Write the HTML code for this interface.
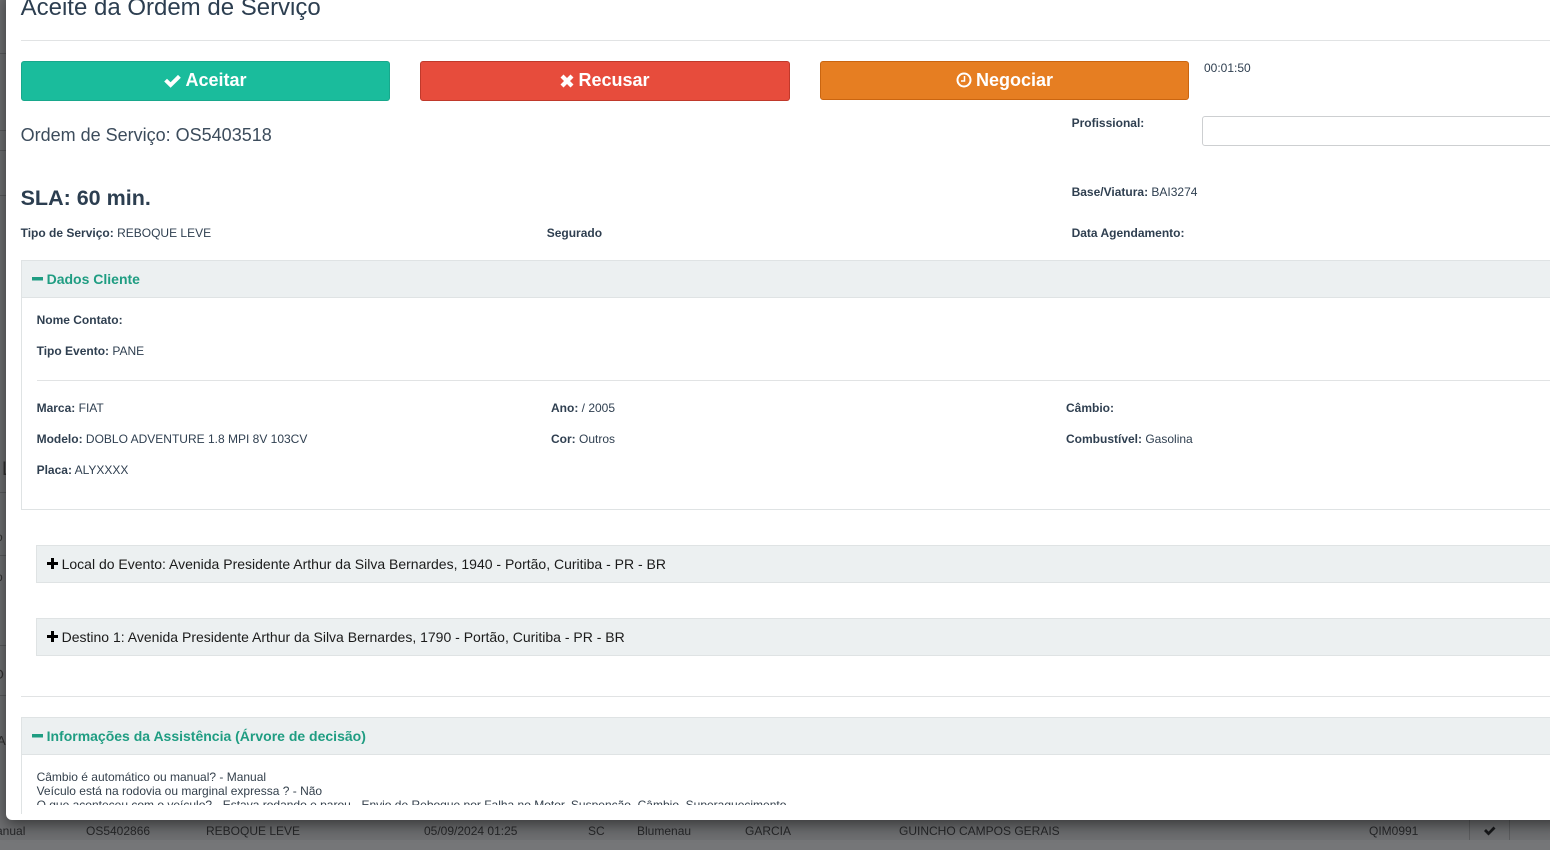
<!DOCTYPE html>
<html lang="pt">
<head>
<meta charset="utf-8">
<title>Aceite da Ordem de Serviço</title>
<style>
html,body{margin:0;padding:0;width:1550px;height:850px;overflow:hidden;background:#6e6f71;font-family:"Liberation Sans",sans-serif;color:#2c3e50}
*{box-sizing:border-box}
.a{position:absolute;white-space:nowrap}
.bg{color:#262729;font-size:12px;line-height:16px}
.sl{position:absolute;left:0;width:6px;height:1px;background:#5a5b5d}
#modal{position:absolute;left:6px;top:-10px;width:1560px;height:830px;background:#fff;border-radius:6px;box-shadow:0 5px 15px rgba(0,0,0,.5);overflow:hidden}
#c{position:absolute;left:-6px;top:10px;width:1550px;height:820px}
.t{font-size:12px;line-height:16px;color:#2f3f50}
.t b{font-weight:700}
.hr{position:absolute;height:1px;background:#e1e3e4}
.btn{position:absolute;top:61px;height:40px;border-radius:3px;color:#fff;font-weight:700;font-size:18px;line-height:36px;text-align:center;border:1px solid}
.btn svg{display:inline-block;vertical-align:-2px;margin-right:4px}
.ph{position:absolute;left:21px;width:1540px;height:38px;background:#ecf0f1;border:1px solid #dfe3e4}
.ph2{position:absolute;left:36px;width:1530px;height:38px;background:#ecf0f1;border:1px solid #dfe3e4}
.gt{font-size:14px;font-weight:700;color:#1f9d82;line-height:18px}
.bk{font-size:14px;color:#1b1b1b;line-height:18px}
</style>
</head>
<body>
<div class="a bg" style="left:-14px;top:823px">Manual</div>
<div class="a bg" style="left:86px;top:823px">OS5402866</div>
<div class="a bg" style="left:206px;top:823px">REBOQUE LEVE</div>
<div class="a bg" style="left:424px;top:823px">05/09/2024 01:25</div>
<div class="a bg" style="left:588px;top:823px">SC</div>
<div class="a bg" style="left:637px;top:823px">Blumenau</div>
<div class="a bg" style="left:745px;top:823px">GARCIA</div>
<div class="a bg" style="left:899px;top:823px">GUINCHO CAMPOS GERAIS</div>
<div class="a bg" style="left:1369px;top:823px">QIM0991</div>
<div class="a" style="left:1469px;top:820px;width:1px;height:20px;background:#5c5d5f"></div>
<div class="a" style="left:1509px;top:820px;width:1px;height:20px;background:#5c5d5f"></div>
<svg class="a" style="left:1483px;top:825px" width="13" height="11" viewBox="0 0 13 11"><path d="M1 6l2-2 2.600 2.600L10.500 1.500l2 2-7 7z" fill="#17181a"/></svg>
<div class="a" style="left:0;top:840px;width:1550px;height:10px;background:#757678"></div>
<div class="sl" style="top:53px"></div><div class="sl" style="top:130px"></div><div class="sl" style="top:150px"></div><div class="sl" style="top:195px"></div>
<div class="sl" style="top:492px"></div><div class="sl" style="top:555px"></div><div class="sl" style="top:645px"></div><div class="sl" style="top:695px"></div>
<div class="a" style="left:2px;top:460px;color:#333;font-size:19px;line-height:20px">L</div>
<div class="a" style="left:-4px;top:530px;color:#333;font-size:12px;line-height:14px">o</div>
<div class="a" style="left:-4px;top:570px;color:#333;font-size:12px;line-height:14px">p</div>
<div class="a" style="left:-7px;top:666px;color:#333;font-size:14px;line-height:16px">O</div>
<div class="a" style="left:-3px;top:733px;color:#333;font-size:13px;line-height:16px">A</div>
<div id="modal"><div id="c">
  <div class="a" style="left:20.600px;top:-6px;font-size:24px;line-height:28px;color:#2c3e50">Aceite da Ordem de Serviço</div>
  <div class="hr" style="left:21px;top:40px;width:1540px"></div>

  <div class="btn" style="left:21px;width:369px;background:#1abc9c;border-color:#18a88c">
    <svg width="17" height="14" viewBox="0 0 17 14"><path d="M0.200 7.500l2.800-2.800 3.600 3.600L14 .9l2.800 2.800-10.200 10z" fill="#fff"/></svg>Aceitar</div>
  <div class="btn" style="left:420px;width:370px;background:#e74c3c;border-color:#c0392b">
    <svg width="14" height="14" viewBox="0 0 14 14"><path d="M.5 3.500L3.500 .5 7 4l3.500-3.500 3 3L10 7l3.500 3.500-3 3L7 10l-3.500 3.500-3-3L4 7z" fill="#fff"/></svg>Recusar</div>
  <div class="btn" style="left:820px;width:369px;height:39px;background:#e67e22;border-color:#ca6510">
    <svg width="16" height="16" viewBox="0 0 16 16"><circle cx="8" cy="8" r="6.500" fill="none" stroke="#fff" stroke-width="2"/><path d="M8.500 4v5H5" fill="none" stroke="#fff" stroke-width="1.500"/></svg>Negociar</div>
  <div class="a t" style="left:1204px;top:60px">00:01:50</div>

  <div class="a" style="left:20.600px;top:124px;font-size:18px;line-height:22px;color:#3c4c5c">Ordem de Serviço: OS5403518</div>
  <div class="a t" style="left:1071.600px;top:115px"><b>Profissional:</b></div>
  <div class="a" style="left:1202px;top:116px;width:360px;height:30px;border:1px solid #cdcfd1;border-radius:3px;background:#fff"></div>

  <div class="a" style="left:20.600px;top:185px;font-size:21.500px;line-height:26px;font-weight:700;color:#2c3e50">SLA: 60 min.</div>
  <div class="a t" style="left:1071.600px;top:184px"><b>Base/Viatura:</b> BAI3274</div>
  <div class="a t" style="left:20.600px;top:225px"><b>Tipo de Serviço:</b> REBOQUE LEVE</div>
  <div class="a t" style="left:546.700px;top:225px"><b>Segurado</b></div>
  <div class="a t" style="left:1071.600px;top:225px"><b>Data Agendamento:</b></div>

  <div class="a" style="left:21px;top:260px;width:1540px;height:250px;border:1px solid #dfe3e4"></div>
  <div class="ph" style="top:260px"></div>
  <svg class="a" style="left:32px;top:277px" width="11" height="4"><rect width="11" height="3.500" y="0" fill="#1f9d82"/></svg>
  <div class="a gt" style="left:46.600px;top:270px">Dados Cliente</div>
  <div class="a t" style="left:36.600px;top:312px"><b>Nome Contato:</b></div>
  <div class="a t" style="left:36.600px;top:343px"><b>Tipo Evento:</b> PANE</div>
  <div class="hr" style="left:37px;top:380px;width:1520px"></div>
  <div class="a t" style="left:36.600px;top:400px"><b>Marca:</b> FIAT</div>
  <div class="a t" style="left:36.600px;top:431px"><b>Modelo:</b> DOBLO ADVENTURE 1.8 MPI 8V 103CV</div>
  <div class="a t" style="left:36.600px;top:462px"><b>Placa:</b> ALYXXXX</div>
  <div class="a t" style="left:551px;top:400px"><b>Ano:</b> / 2005</div>
  <div class="a t" style="left:551px;top:431px"><b>Cor:</b> Outros</div>
  <div class="a t" style="left:1066px;top:400px"><b>Câmbio:</b></div>
  <div class="a t" style="left:1066px;top:431px"><b>Combustível:</b> Gasolina</div>

  <div class="ph2" style="top:545px"></div>
  <svg class="a" style="left:47px;top:558px" width="11" height="11"><path d="M4 0h3v4h4v3H7v4H4V7H0V4h4z" fill="#000"/></svg>
  <div class="a bk" style="left:61.600px;top:555px">Local do Evento: Avenida Presidente Arthur da Silva Bernardes, 1940 - Portão, Curitiba - PR - BR</div>
  <div class="ph2" style="top:618px"></div>
  <svg class="a" style="left:47px;top:631px" width="11" height="11"><path d="M4 0h3v4h4v3H7v4H4V7H0V4h4z" fill="#000"/></svg>
  <div class="a bk" style="left:61.600px;top:628px">Destino 1: Avenida Presidente Arthur da Silva Bernardes, 1790 - Portão, Curitiba - PR - BR</div>

  <div class="hr" style="left:21px;top:696px;width:1540px"></div>

  <div class="ph" style="top:717px"></div>
  <div class="a" style="left:21px;top:754px;width:1px;height:60px;background:#dfe3e4"></div>
  <svg class="a" style="left:32px;top:734px" width="11" height="4"><rect width="11" height="3.500" y="0" fill="#1f9d82"/></svg>
  <div class="a gt" style="left:46.600px;top:727px">Informações da Assistência (Árvore de decisão)</div>
  <div class="a" style="left:22px;top:755px;width:1530px;height:50px;overflow:hidden">
    <div class="a t" style="left:14.600px;top:15px;line-height:14px;color:#34404c">Câmbio é automático ou manual? - Manual<br>Veículo está na rodovia ou marginal expressa ? - Não<br>O que aconteceu com o veículo? - Estava rodando e parou - Envio de Reboque por Falha no Motor, Suspenção, Câmbio, Superaquecimento</div>
  </div>
</div></div>
</body>
</html>
